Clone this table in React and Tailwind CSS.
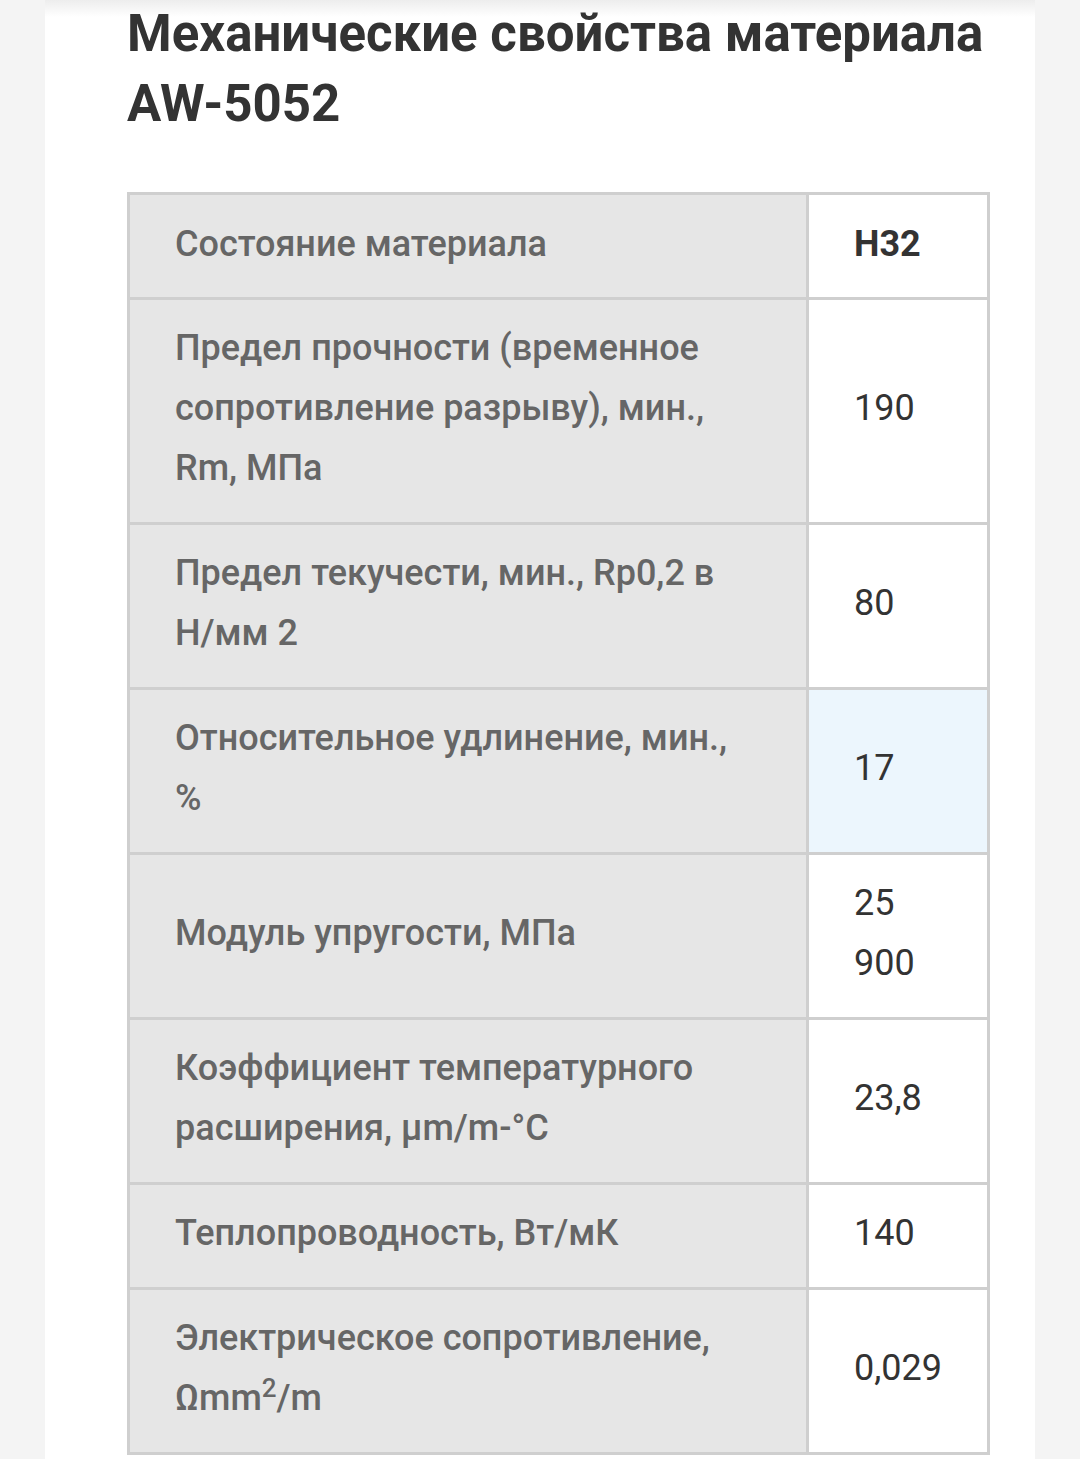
import React from 'react';

const rows = [
  { label: 'Предел прочности (временное сопротивление разрыву), мин., Rm, МПа', value: '190' },
  {
    label: (
      <>
        Предел текучести, мин., Rp0,2 в <span className="whitespace-nowrap">Н/мм</span> 2
      </>
    ),
    value: '80',
  },
  { label: 'Относительное удлинение, мин., %', value: '17', hover: true },
  { label: 'Модуль упругости, МПа', value: '25 900' },
  { label: 'Коэффициент температурного расширения, μm/m-°C', value: '23,8' },
  { label: 'Теплопроводность, Вт/мК', value: '140' },
  {
    label: (
      <>
        Электрическое сопротивление, Ωmm<sup className="text-[26px] leading-none">2</sup>/m
      </>
    ),
    value: '0,029',
  },
];

const App = () => {
  return (
    <div className="min-h-[1460px] bg-[#f4f4f4] font-['Roboto',sans-serif]">
      <div className="relative mx-[45px] min-h-[1460px] bg-white pl-[82px] pr-[45px]">
        {/* top shadow */}
        <div className="absolute inset-x-0 top-0 h-[18px] bg-gradient-to-b from-[#ececec] to-white" />
        <h1 className="relative -mt-[1px] text-[51px] font-bold leading-[70px] text-[#333]">
          Механические свойства материала AW-5052
        </h1>

        <table className="mt-[53px] w-[863px] border-collapse border-[3px] border-[#cfcfcf] text-[36px] leading-[60px]">
          <tbody>
            <tr className="h-[105px]">
              <td className="w-[679px] border-[3px] border-[#cfcfcf] bg-[#e6e6e6] px-[45px] pb-[5px] font-medium text-[#666]">
                Состояние материала
              </td>
              <td className="border-[3px] border-[#cfcfcf] bg-white px-[45px] pb-[5px] font-bold text-[#333]">
                H32
              </td>
            </tr>
            {rows.map((r, i) => (
              <tr key={i}>
                <td className="border-[3px] border-[#cfcfcf] bg-[#e6e6e6] pt-[18px] pb-[24px] pl-[45px] pr-[56px] font-medium text-[#666]">
                  {r.label}
                </td>
                <td
                  className={`border-[3px] border-[#cfcfcf] px-[45px] pt-[18px] pb-[24px] text-[#333] ${
                    r.hover ? 'bg-[#ecf6fd]' : 'bg-white'
                  }`}
                >
                  {r.value}
                </td>
              </tr>
            ))}
          </tbody>
        </table>
      </div>
    </div>
  );
};

export default App;
